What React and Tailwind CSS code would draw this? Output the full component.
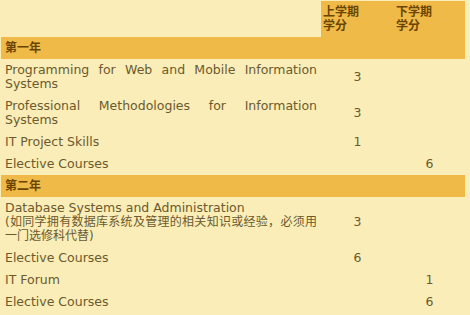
import React from 'react';

const years = [
  {
    title: '第一年',
    courses: [
      { name: 'Programming for Web and Mobile Information Systems', s1: '3', s2: '' },
      { name: 'Professional Methodologies for Information Systems', s1: '3', s2: '' },
      { name: 'IT Project Skills', s1: '1', s2: '' },
      { name: 'Elective Courses', s1: '', s2: '6' },
    ],
  },
  {
    title: '第二年',
    courses: [
      {
        name: 'Database Systems and Administration',
        note: '(如同学拥有数据库系统及管理的相关知识或经验，必须用一门选修科代替)',
        s1: '3',
        s2: '',
      },
      { name: 'Elective Courses', s1: '6', s2: '' },
      { name: 'IT Forum', s1: '', s2: '1' },
      { name: 'Elective Courses', s1: '', s2: '6' },
    ],
  },
];

const App = () => {
  return (
    <div
      className="w-[470px] h-[315px] bg-[#faedb7] text-[#6b5a2e] text-[12.5px] leading-[14px] pt-px pl-px overflow-hidden"
      style={{ fontFamily: '"DejaVu Sans", Verdana, "Noto Sans CJK SC", sans-serif' }}
    >
      <table className="w-[464px] border-collapse table-fixed">
        <colgroup>
          <col className="w-[320px]" />
          <col className="w-[73px]" />
          <col className="w-[71px]" />
        </colgroup>
        <thead>
          <tr className="h-[36px]">
            <th></th>
            <th className="bg-[#f0ba48] text-[#6a4500] text-[12px] font-bold text-left align-middle px-[2px] py-1">
              上学期
              <br />
              学分
            </th>
            <th className="bg-[#f0ba48] text-[#6a4500] text-[12px] font-bold text-left align-middle px-[2px] py-1">
              下学期
              <br />
              学分
            </th>
          </tr>
        </thead>
        <tbody>
          {years.map((year) => (
            <React.Fragment key={year.title}>
              <tr className="bg-[#f0ba48]">
                <td colSpan={3} className="text-[#6a4500] text-[12px] font-bold px-1 py-1">
                  {year.title}
                </td>
              </tr>
              {year.courses.map((c, i) => (
                <tr key={year.title + i}>
                  <td className="px-1 py-1 text-justify align-middle">
                    {c.name}
                    {c.note && (
                      <>
                        <br />
                        <span className="text-[12px]">{c.note}</span>
                      </>
                    )}
                  </td>
                  <td className="py-1 text-center align-middle">{c.s1}</td>
                  <td className="py-1 text-center align-middle">{c.s2}</td>
                </tr>
              ))}
            </React.Fragment>
          ))}
        </tbody>
      </table>
    </div>
  );
};

export default App;
